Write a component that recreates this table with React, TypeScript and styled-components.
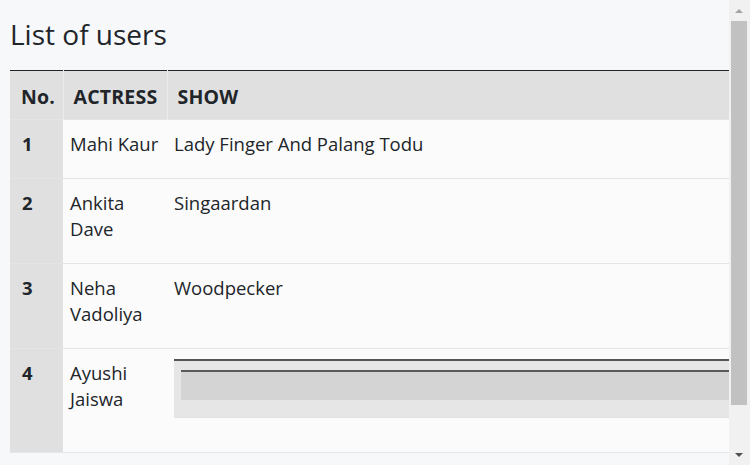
import React from "react";
import styled, { createGlobalStyle } from "styled-components";

const Global = createGlobalStyle`
  html, body {
    margin: 0;
    padding: 0;
    height: 100%;
    overflow: hidden;
    background: #f7f8fa;
  }
  body {
    color: #212529;
    font-family: "Open Sans", "Noto Sans", sans-serif;
  }
`;

const Frame = styled.div`
  display: flex;
  height: 465px;
  width: 750px;
  overflow: hidden;
`;

const Content = styled.main`
  flex: 1;
  min-width: 0;
  display: flex;
  flex-direction: column;
  padding-left: 10px;
  overflow: hidden;
`;

const ScrollBar = styled.div`
  width: 21px;
  flex: none;
  display: flex;
  flex-direction: column;
  background: #f1f1f1;
`;

const ScrollButton = styled.div`
  height: 21px;
  flex: none;
  display: flex;
  align-items: center;
  justify-content: center;
`;

const Arrow = styled.span<{ $dir: "up" | "down" }>`
  width: 0;
  height: 0;
  margin-right: 1px;
  border-left: 4px solid transparent;
  border-right: 4px solid transparent;
  ${(p) =>
    p.$dir === "up"
      ? "border-bottom: 4px solid #a3a3a3;"
      : "border-top: 4px solid #505050;"}
`;

const Track = styled.div`
  flex: 1;
  display: flex;
  flex-direction: column;
`;

const Thumb = styled.div`
  height: 384px;
  margin: 0 3px 0 2px;
  background: #c1c1c1;
`;

const Title = styled.h2`
  margin: 16px 0 18px;
  font-size: 28px;
  font-weight: 400;
  line-height: 36px;
  color: #212529;
`;

const Table = styled.table`
  width: 100%;
  table-layout: fixed;
  border-collapse: collapse;
  border-top: 1.5px solid #212529;
  border-bottom: 1px solid #e3e5e8;
  font-size: 18.5px;
  line-height: 26px;
`;

const Col = styled.col<{ $w?: number }>`
  ${(p) => (p.$w ? `width: ${p.$w}px;` : "")}
`;

const HeadCell = styled.th`
  background: #e0e0e0;
  padding: 13px 6px 9px 10px;
  text-align: left;
  font-weight: 700;
  font-size: 19.5px;
  letter-spacing: 0.2px;
  white-space: nowrap;
  overflow: hidden;
  border-left: 1px solid #ebebeb;
  &:first-child {
    border-left: none;
    padding-left: 11px;
  }
`;

const Row = styled.tr`
  border-top: 1px solid #e3e5e8;
`;

const NumCell = styled.th`
  background: #e0e0e0;
  padding: 11px 8px 21px 12px;
  text-align: left;
  vertical-align: top;
  font-weight: 700;
`;

const Cell = styled.td`
  background: #fbfbfc;
  padding: 11px 7px 21px 7px;
  vertical-align: top;
`;

const Nested = styled.div`
  margin: -1px -7px 13px 0;
  padding: 9px 0 17px 7px;
  background: #e6e6e6;
  border-top: 2px solid #555;
  border-bottom: 1px solid #e1e3e6;
`;

const NestedHead = styled.div`
  height: 28px;
  background: #d4d4d4;
  border-top: 2px solid #5a5a5a;
`;

const users = [
  { no: 1, actress: "Mahi Kaur", show: "Lady Finger And Palang Todu" },
  { no: 2, actress: "Ankita Dave", show: "Singaardan" },
  { no: 3, actress: "Neha Vadoliya", show: "Woodpecker" },
  { no: 4, actress: "Ayushi Jaiswa", show: null },
];

export default function App() {
  return (
    <>
      <Global />
      <Frame>
        <Content>
          <Title>List of users</Title>
          <Table>
            <colgroup>
              <Col $w={53} />
              <Col $w={104} />
              <Col />
            </colgroup>
            <thead>
              <tr>
                <HeadCell>No.</HeadCell>
                <HeadCell>ACTRESS</HeadCell>
                <HeadCell>SHOW</HeadCell>
              </tr>
            </thead>
            <tbody>
              {users.map((u) => (
                <Row key={u.no}>
                  <NumCell>{u.no}</NumCell>
                  <Cell>{u.actress}</Cell>
                  <Cell>
                    {u.show ?? (
                      <Nested>
                        <NestedHead />
                      </Nested>
                    )}
                  </Cell>
                </Row>
              ))}
            </tbody>
          </Table>
        </Content>
        <ScrollBar>
          <ScrollButton>
            <Arrow $dir="up" />
          </ScrollButton>
          <Track>
            <Thumb />
          </Track>
          <ScrollButton>
            <Arrow $dir="down" />
          </ScrollButton>
        </ScrollBar>
      </Frame>
    </>
  );
}
